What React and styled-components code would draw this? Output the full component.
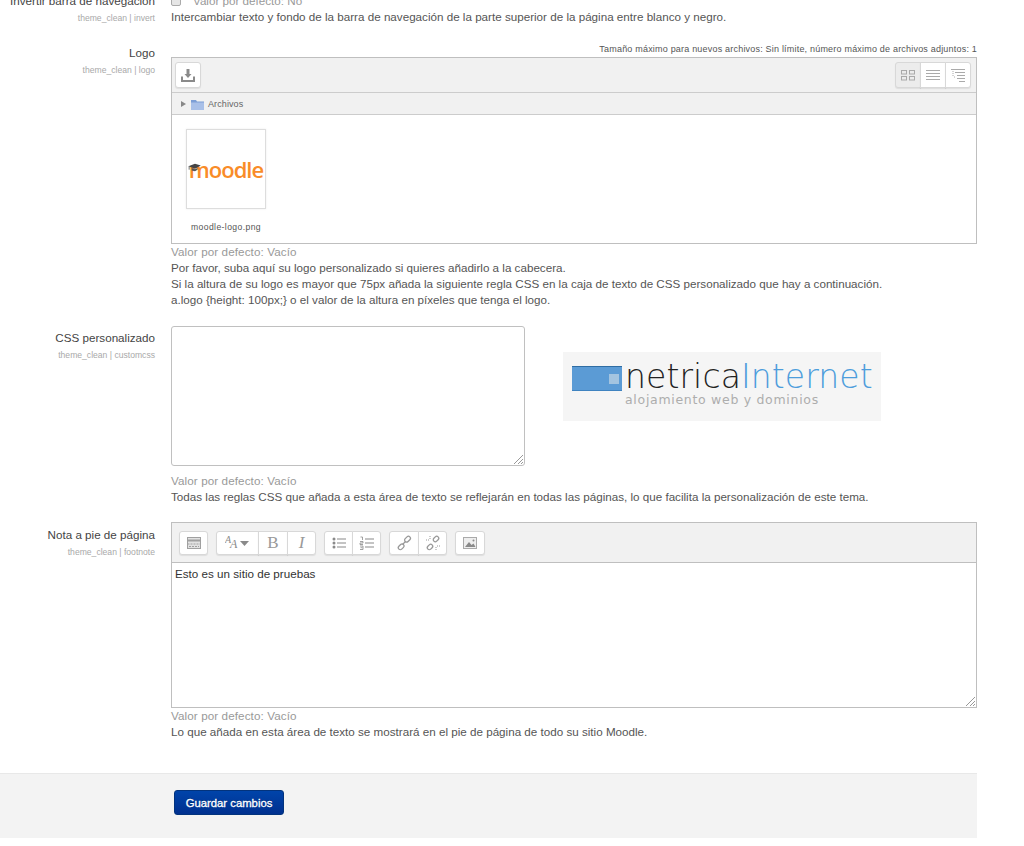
import React from "react";
import styled, { createGlobalStyle } from "styled-components";

const Global = createGlobalStyle`
  html, body { margin: 0; padding: 0; background: #fff; overflow: hidden; }
  body { font-family: "Liberation Sans", Arial, sans-serif; font-size: 11.65px; line-height: 16px; color: #555; }
`;
const Page = styled.div`
  width: 977px;
  height: 846px;
  overflow: hidden;
`;
const Form = styled.div`
  margin-top: -7px;
  display: flex;
  flex-direction: column;
`;
const Row = styled.div`
  display: grid;
  grid-template-columns: 155px 806px;
  column-gap: 16px;
  margin-bottom: ${p => p.$gap}px;
`;
const LabelCol = styled.div`
  text-align: right;
  padding-top: ${p => p.$top}px;
`;
const Label = styled.div`
  font-size: 11.65px;
  line-height: 16px;
  color: #444;
`;
const Small = styled.div`
  font-size: 8.6px;
  line-height: 12px;
  margin-top: 3px;
  color: #a9a9a9;
`;
const Content = styled.div`
  min-width: 0;
  display: flex;
  flex-direction: column;
`;
const DefaultLine = styled.div`
  display: flex;
  align-items: center;
  gap: 12px;
  color: #999;
  height: 16px;
`;
const Check = styled.span`
  width: 10px;
  height: 10px;
  box-sizing: border-box;
  border: 1px solid #aaa;
  border-radius: 2px;
  background: #e6e6e6;
`;
const Default = styled.div`
  color: #999;
  margin-top: ${p => p.$top || 0}px;
  letter-spacing: 0.1px;
`;
const Desc = styled.div`
  color: #555;
`;
const Note = styled.div`
  text-align: right;
  font-size: 9px;
  line-height: 12px;
  color: #555;
  letter-spacing: 0.2px;
  height: 12px;
  margin-bottom: 2px;
`;
const Picker = styled.div`
  height: 187px;
  box-sizing: border-box;
  border: 1px solid #bfbfbf;
  display: flex;
  flex-direction: column;
`;
const PickerBar = styled.div`
  height: 35px;
  flex: none;
  box-sizing: border-box;
  background: #f1f1f1;
  border-bottom: 1px solid #ccc;
  display: flex;
  justify-content: space-between;
  align-items: center;
  padding: 0 5px 0 3px;
`;
const PathBar = styled.div`
  height: 22px;
  flex: none;
  box-sizing: border-box;
  background: #f1f1f1;
  border-bottom: 1px solid #ccc;
  display: flex;
  align-items: center;
  padding: 1px 0 0 9px;
  gap: 4px;
  font-size: 9px;
  letter-spacing: 0.1px;
  color: #666;
`;
const Tri = styled.span`
  width: 0;
  height: 0;
  border-left: 5px solid #888;
  border-top: 3px solid transparent;
  border-bottom: 3px solid transparent;
  margin-right: 1px;
`;
const Btn = styled.span`
  display: flex;
  align-items: center;
  justify-content: center;
  box-sizing: border-box;
  width: ${p => p.$w || 26}px;
  height: ${p => p.$h || 26}px;
  background: ${p => (p.$active ? "#ececec" : "#fff")};
  border: 1px solid #d8d8d8;
  border-radius: 3px;
  box-shadow: 0 1px 1px rgba(0, 0, 0, 0.08);
`;
const Group = styled.div`
  display: flex;
  & > span { border-radius: 0; margin-left: -1px; }
  & > span:first-child { border-radius: 3px 0 0 3px; margin-left: 0; }
  & > span:last-child { border-radius: 0 3px 3px 0; }
`;
const Files = styled.div`
  flex: 1;
  padding: 14px 14px 0;
`;
const FileItem = styled.div`
  width: 80px;
  display: flex;
  flex-direction: column;
  align-items: center;
`;
const Thumb = styled.div`
  width: 80px;
  height: 80px;
  box-sizing: border-box;
  border: 1px solid #ddd;
  box-shadow: 0 0 2px rgba(0, 0, 0, 0.08);
  position: relative;
  display: flex;
  align-items: center;
  justify-content: center;
  padding-bottom: 1px;
`;
const MoodleWord = styled.span`
  font-family: "Open Sans", "Liberation Sans", sans-serif;
  font-weight: 600;
  font-size: 22px;
  letter-spacing: -1px;
  color: #f98c28;
  line-height: 24px;
`;
const Hat = styled.svg`
  position: absolute;
  left: 1px;
  top: 33px;
`;
const FileName = styled.div`
  font-size: 8.6px;
  line-height: 12px;
  color: #555;
  margin-top: 12px;
  letter-spacing: 0.4px;
  white-space: nowrap;
`;
const CssArea = styled.div`
  display: flex;
  align-items: flex-start;
`;
const Area = styled.div`
  width: 354px;
  height: 140px;
  flex: none;
  box-sizing: border-box;
  border: 1px solid #c0c0c0;
  border-radius: 3px;
  position: relative;
`;
const Grip = styled.svg`
  position: absolute;
  right: 1px;
  bottom: 1px;
`;
const Netrica = styled.div`
  width: 318px;
  height: 69px;
  margin: 26px 0 0 38px;
  background: #f5f5f5;
  position: relative;
  display: flex;
  flex-direction: column;
  padding-left: 62px;
  box-sizing: border-box;
`;
const Bar = styled.div`
  position: absolute;
  left: 9px;
  top: 14px;
  width: 50px;
  height: 25px;
  box-sizing: border-box;
  background: #5b9bd5;
  border-top: 1px solid #2f6da3;
  border-bottom: 1px solid #3f83c0;
  &::after {
    content: "";
    position: absolute;
    right: 3px;
    top: 7px;
    width: 10px;
    height: 10px;
    background: #a3c4e0;
  }
`;
const Brand = styled.div`
  font-family: "DejaVu Sans", sans-serif;
  font-weight: 200;
  font-size: 33px;
  line-height: 32px;
  margin-top: 9px;
  letter-spacing: 0.1px;
  color: #222;
  white-space: nowrap;
`;
const BrandBlue = styled.span`
  color: #4d9ddc;
`;
const Tag = styled.div`
  font-family: "DejaVu Sans", sans-serif;
  font-size: 12.5px;
  line-height: 14px;
  letter-spacing: 0.7px;
  color: #adadad;
  white-space: nowrap;
`;
const Editor = styled.div`
  height: 186px;
  box-sizing: border-box;
  border: 1px solid #bfbfbf;
  display: flex;
  flex-direction: column;
`;
const EditorBar = styled.div`
  height: 40px;
  flex: none;
  box-sizing: border-box;
  background: #f1f1f1;
  border-bottom: 1px solid #bfbfbf;
  display: flex;
  align-items: center;
  gap: 8px;
  padding-left: 7px;
`;
const EditorBody = styled.div`
  flex: 1;
  padding: 3px;
  color: #333;
  position: relative;
`;
const Actions = styled.div`
  margin-top: 33px;
  height: 65px;
  box-sizing: border-box;
  background: #f3f3f3;
  border-top: 1px solid #e8e8e8;
  padding: 16px 0 0 174px;
`;
const Save = styled.button`
  display: block;
  width: 110px;
  height: 25px;
  padding: 0;
  border: 1px solid #02337d;
  border-radius: 3px;
  background: linear-gradient(#0044aa, #00308f);
  color: #fff;
  font-family: "Liberation Sans", sans-serif;
  font-size: 11.3px;
  font-weight: 400;
  -webkit-text-stroke: 0.3px #fff;
  text-shadow: 0 -1px 0 rgba(0, 0, 0, 0.25);
`;

const G = "#8a8a8a";
const Ic = ({ children, w = 16, h = 16, s = G }) => (
  <svg width={w} height={h} viewBox={`0 0 ${w} ${h}`} fill="none" stroke={s} strokeWidth="1">{children}</svg>
);
const Download = () => (
  <Ic><path d="M8 2v6" strokeWidth="3" /><path d="M4.500 7L8 11l3.500-4z" fill={G} stroke="none" /><path d="M2 9.500v4.500h12V9.500" strokeWidth="2" /></Ic>
);
const GridI = () => (
  <Ic s="#aaa">
    <rect x="1.500" y="3.500" width="5" height="3.500" /><rect x="9.500" y="3.500" width="5" height="3.500" />
    <rect x="1.500" y="9.500" width="5" height="3.500" /><rect x="9.500" y="9.500" width="5" height="3.500" />
  </Ic>
);
const ListI = () => (
  <Ic s="#aaa"><path d="M1 3.500h14M1 6.500h14M1 9.500h14M1 12.500h14" /></Ic>
);
const TreeI = () => (
  <Ic s="#aaa"><path d="M1 2.500h14M5 5.500h10M7 8.500h8M7 11.500h8M9 14.500h6" /><path d="M3 4v6M4 10h2" strokeDasharray="1 1" /></Ic>
);
const Folder = () => (
  <svg width="13" height="11" viewBox="0 0 13 11"><path d="M0 1h5l1 1.500h7v8.500H0z" fill="#7d9fd6" /><rect x="0" y="3.500" width="13" height="7.500" fill="#a9c0e8" /></svg>
);
const TableI = () => (
  <Ic s="#a0a0a0"><rect x="1.500" y="2.500" width="13" height="11" fill="#e2e2e2" /><path d="M1.500 5.500h13" strokeWidth="2" /><path d="M1.500 9h13M3 11.500h10" strokeDasharray="2 1" /></Ic>
);
const StyleI = () => (
  <svg width="26" height="18" viewBox="0 0 26 18">
    <text x="0" y="9" fontFamily="Liberation Serif" fontStyle="italic" fontSize="10" fill={G}>A</text>
    <text x="5" y="14" fontFamily="Liberation Serif" fontStyle="italic" fontSize="12" fill={G}>A</text>
    <path d="M15 7h9l-4.500 5z" fill={G} />
  </svg>
);
const LetterSpan = styled.span`
  font-family: "Liberation Serif", serif;
  font-size: 17px;
  line-height: 20px;
  color: #999;
  font-style: ${p => (p.$italic ? "italic" : "normal")};
`;
const Bullets = () => (
  <Ic><g fill={G} stroke="none"><circle cx="3" cy="4" r="1.500" /><circle cx="3" cy="8" r="1.500" /><circle cx="3" cy="12" r="1.500" /></g><path d="M6 4h9M6 8h9M6 12h9" strokeWidth="1.200" /></Ic>
);
const Numbers = () => (
  <Ic><path d="M1.500 2h2v3M1 6.500h3v1.500h-3v1.500h3M1 11h3v3.500h-3M1.500 12.700h2" strokeWidth="0.8" /><path d="M6 4h9M6 8h9M6 12h9" strokeWidth="1.200" /></Ic>
);
const LinkI = () => (
  <Ic s="#999">
    <rect x="8" y="2.500" width="6.500" height="4" rx="2" transform="rotate(-45 11 4)" strokeWidth="1.300" />
    <rect x="2" y="10" width="6.500" height="4" rx="2" transform="rotate(-45 5 12)" strokeWidth="1.300" />
    <path d="M6.500 9.500l3-3" strokeWidth="1.300" />
  </Ic>
);
const UnlinkI = () => (
  <Ic s="#999">
    <rect x="8" y="2" width="6" height="4" rx="2" transform="rotate(-45 11 4)" strokeWidth="1.300" />
    <rect x="2" y="10" width="6" height="4" rx="2" transform="rotate(-45 5 12)" strokeWidth="1.300" />
    <path d="M1 5h3M5 1v3M15 11h-3M11 15v-3" strokeDasharray="1 1" />
  </Ic>
);
const ImageI = () => (
  <Ic s="#aaa"><rect x="1.500" y="2.500" width="13" height="11" fill="#eee" /><path d="M3 12l4-5 2.500 3 2-1.500L13.500 12z" fill={G} stroke="none" /><circle cx="11.500" cy="5.500" r="1" fill={G} stroke="none" /></Ic>
);
const GripI = () => (
  <Grip width="9" height="9" viewBox="0 0 9 9" stroke="#999" strokeWidth="1"><path d="M0 9L9 0M4 9l5-5M7 9l2-2" /></Grip>
);

export default function App() {
  return (
    <Page>
      <Global />
      <Form>
        <Row $gap={18}>
          <LabelCol $top={0}>
            <Label>Invertir barra de navegación</Label>
            <Small>theme_clean | invert</Small>
          </LabelCol>
          <Content>
            <DefaultLine><Check />Valor por defecto: No</DefaultLine>
            <Desc>Intercambiar texto y fondo de la barra de navegación de la parte superior de la página entre blanco y negro.</Desc>
          </Content>
        </Row>
        <Row $gap={18}>
          <LabelCol $top={2}>
            <Label>Logo</Label>
            <Small>theme_clean | logo</Small>
          </LabelCol>
          <Content>
            <Note>Tamaño máximo para nuevos archivos: Sin límite, número máximo de archivos adjuntos: 1</Note>
            <Picker>
              <PickerBar>
                <Btn><Download /></Btn>
                <Group>
                  <Btn $active><GridI /></Btn>
                  <Btn><ListI /></Btn>
                  <Btn><TreeI /></Btn>
                </Group>
              </PickerBar>
              <PathBar><Tri /><Folder />Archivos</PathBar>
              <Files>
                <FileItem>
                  <Thumb>
                    <Hat width="14" height="10" viewBox="0 0 16 12">
                      <path d="M0 4l8-3 7 2-7 4z" fill="#444" /><path d="M4 6v3l4 1 3-2V6L8 7.500z" fill="#555" /><path d="M1 4v4" stroke="#555" />
                    </Hat>
                    <MoodleWord>moodle</MoodleWord>
                  </Thumb>
                  <FileName>moodle-logo.png</FileName>
                </FileItem>
              </Files>
            </Picker>
            <Default $top={0}>Valor por defecto: Vacío</Default>
            <Desc>Por favor, suba aquí su logo personalizado si quieres añadirlo a la cabecera.</Desc>
            <Desc>Si la altura de su logo es mayor que 75px añada la siguiente regla CSS en la caja de texto de CSS personalizado que hay a continuación.</Desc>
            <Desc>a.logo {"{"}height: 100px;{"}"} o el valor de la altura en píxeles que tenga el logo.</Desc>
          </Content>
        </Row>
        <Row $gap={17}>
          <LabelCol $top={4}>
            <Label>CSS personalizado</Label>
            <Small>theme_clean | customcss</Small>
          </LabelCol>
          <Content>
            <CssArea>
              <Area><GripI /></Area>
              <Netrica>
                <Bar />
                <Brand>netrica<BrandBlue>Internet</BrandBlue></Brand>
                <Tag>alojamiento web y dominios</Tag>
              </Netrica>
            </CssArea>
            <Default $top={7}>Valor por defecto: Vacío</Default>
            <Desc>Todas las reglas CSS que añada a esta área de texto se reflejarán en todas las páginas, lo que facilita la personalización de este tema.</Desc>
          </Content>
        </Row>
        <Row $gap={0}>
          <LabelCol $top={5}>
            <Label>Nota a pie de página</Label>
            <Small>theme_clean | footnote</Small>
          </LabelCol>
          <Content>
            <Editor>
              <EditorBar>
                <Btn $w={29} $h={24}><TableI /></Btn>
                <Group>
                  <Btn $w={43} $h={24}><StyleI /></Btn>
                  <Btn $w={30} $h={24}><LetterSpan>B</LetterSpan></Btn>
                  <Btn $w={29} $h={24}><LetterSpan $italic>I</LetterSpan></Btn>
                </Group>
                <Group>
                  <Btn $w={29} $h={24}><Bullets /></Btn>
                  <Btn $w={29} $h={24}><Numbers /></Btn>
                </Group>
                <Group>
                  <Btn $w={30} $h={24}><LinkI /></Btn>
                  <Btn $w={29} $h={24}><UnlinkI /></Btn>
                </Group>
                <Btn $w={30} $h={24}><ImageI /></Btn>
              </EditorBar>
              <EditorBody>
                Esto es un sitio de pruebas
                <GripI />
              </EditorBody>
            </Editor>
            <Default>Valor por defecto: Vacío</Default>
            <Desc>Lo que añada en esta área de texto se mostrará en el pie de página de todo su sitio Moodle.</Desc>
          </Content>
        </Row>
        <Actions><Save>Guardar cambios</Save></Actions>
      </Form>
    </Page>
  );
}
